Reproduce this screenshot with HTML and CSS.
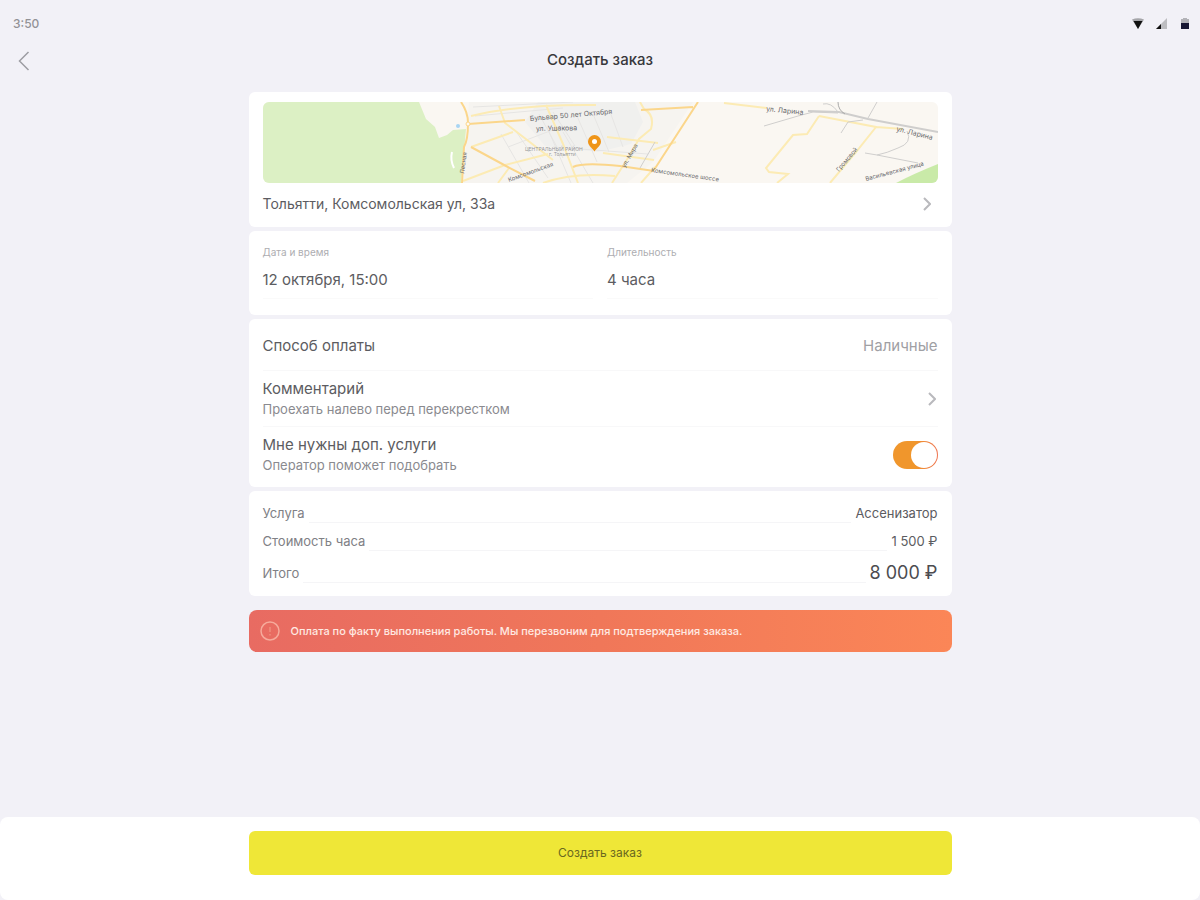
FILE: index.html
```html
<!DOCTYPE html>
<html lang="ru">
<head>
<meta charset="utf-8">
<meta name="viewport" content="width=device-width, initial-scale=1">
<title>Создать заказ</title>
<link rel="stylesheet" href="styles.css">
</head>
<body>
<div class="status">
  <span class="clock">3:50</span>
  <div class="status-icons">
    <svg width="12" height="12" viewBox="0 0 12 12" aria-hidden="true"><path d="M0 1.5Q6-.8 12 1.5L6 11z" fill="#a6a6aa"/><path d="M1.500 3h9L6 11z" fill="#111"/></svg>
    <svg width="12" height="12" viewBox="0 0 12 12" aria-hidden="true"><path d="M11 0v11H0z" fill="#bdbdc1"/><path d="M5 6v5H0z" fill="#111"/></svg>
    <svg width="10" height="12" viewBox="0 0 10 12" aria-hidden="true"><path d="M3 0h4v1h2v5H1V1h2z" fill="#b3b3b8"/><path d="M1 5h8v6H1z" fill="#171733"/></svg>
  </div>
</div>
<header class="header">
  <button class="back" type="button" aria-label="Назад"><svg width="12" height="20" viewBox="0 0 12 20"><path d="M10.500 1L1.500 10l9 9" fill="none" stroke="#9d9da2" stroke-width="1.500"/></svg></button>
  <h1 class="title">Создать заказ</h1>
</header>
<main class="content">
  <section class="card place">
    <svg class="map" viewBox="0 0 675 81" preserveAspectRatio="xMidYMid slice" role="img" aria-label="Карта">
      <rect width="675" height="81" fill="#faf7f2"/>
      <path d="M206 0H430L390 60 364 81H200z" fill="#f6f4f0"/>
      <path d="M275 0H372L380 20 368 42 335 50 282 44 262 20z" fill="#f0f0ee"/>
      <path d="M0 0H156L163 17 172 25 176 36 184 33 190 28 203 27 201 50 198 81H0z" fill="#dcf0c4"/>
      <path d="M675 62V81H633Q650 72 675 62z" fill="#c9eaa8"/>
      <path d="M189 50q-2 8 2 16" fill="none" stroke="#fff" stroke-width="2"/>
      <circle cx="195" cy="24" r="2" fill="#a8d5f3"/>
      <g fill="none" stroke="#e6e5e3">
        <path d="M210 5L310 0M212 14L300 6M245 45L300 24M238 32L266 81M252 28L285 76M284 25L308 81M300 30L330 81M276 12L300 56M290 10L312 44M314 14L334 60M330 12L346 50M346 7L360 45M290 45L385 52"/>
      </g>
      <g fill="none" stroke="#fcebb4" stroke-width="2">
        <path d="M208 14Q255 2 333 3M236 4L242 21 290 58M283 3L300 42 315 81M208 45L250 30M200 79L242 63 285 52M246 66L235 81M280 81Q310 70 352 74M344 35L395 41M340 51L391 58"/>
        <path d="M377 0L381 7Q392 13 388 27L376 37 365 56 349 81M413 40L390 48M392 65L378 81M461 1L504 6M556 14L544 32 530 33 503 66 506 70 525 72 514 81M556 14L613 25 593 50 567 81M613 25L640 27"/>
      </g>
      <g fill="none" stroke="#fbd68b" stroke-width="2">
        <path d="M198 0Q205 10 205 21Q205 38 201 45L199 81M205 22L262 18M208 45L243 64 272 79M310 65Q320 60 357 64L391 69M378 8L430 5M435 0L391 68"/>
      </g>
      <circle cx="205" cy="22" r="2" fill="#fffaf0" stroke="#fbd68b"/>
      <g fill="none" stroke="#cfcecd">
        <path d="M501 24L535 14 550 10 575 11M575 10Q568 0 560 2M578 31L585 20 600 18M605 16L614 0M644 29Q650 41 635 46Q624 51 614 53L602 51M614 53L655 61M392 40L377 66"/>
        <path d="M545 9L576 10 605 17 675 30" stroke-width="2"/><path d="M575 0q0 8 7 12" stroke="#aaa"/>
      </g>
      <g class="map-labels">
        <text class="street" transform="translate(267 19) rotate(-5)">Бульвар 50 лет Октября</text>
        <text class="street" transform="translate(273 29) rotate(-1)">ул. Ушакова</text>
        <text class="district" x="262" y="49">ЦЕНТРАЛЬНЫЙ РАЙОН</text>
        <text class="district" x="286" y="54">г. Тольятти</text>
        <text transform="translate(246 80) rotate(-20)">Комсомольская</text>
        <text transform="translate(201 72) rotate(-82)">Лесная</text>
        <text transform="translate(362 66) rotate(-60)">ул. Мира</text>
        <text transform="translate(388 70) rotate(8)">Комсомольское шоссе</text>
        <text class="street" transform="translate(503 9) rotate(6)">ул. Ларина</text>
        <text class="street" transform="translate(633 29) rotate(14)">ул. Ларина</text>
        <text transform="translate(576 70) rotate(-50)">Громовой</text>
        <text transform="translate(603 79) rotate(-15)">Васильевская улица</text>
      </g>
      <path d="M331.500 33a6.500 6.500 0 0 1 6.500 6.500c0 4-3 5-6.500 10-3.500-5-6.500-6-6.500-10a6.500 6.500 0 0 1 6.500-6.500z" fill="#ef9518"/>
      <circle cx="331.500" cy="39.500" r="2.500" fill="#fff"/>
    </svg>
    <button class="address" type="button">
      <span>Тольятти, Комсомольская ул, 33а</span>
      <svg class="chevron" width="8" height="14" viewBox="0 0 8 14" aria-hidden="true"><path d="M1 1l6 6-6 6"/></svg>
    </button>
  </section>

  <section class="card when">
    <div class="field"><span class="label">Дата и время</span><span class="value">12 октября, 15:00</span></div>
    <div class="field"><span class="label">Длительность</span><span class="value">4 часа</span></div>
  </section>

  <section class="card options">
    <div class="row payment"><span>Способ оплаты</span><span class="muted">Наличные</span></div>
    <button class="row comment" type="button">
      <span class="stack"><span>Комментарий</span><span class="hint">Проехать налево перед перекрестком</span></span>
      <svg class="chevron" width="8" height="14" viewBox="0 0 8 14" aria-hidden="true"><path d="M1 1l6 6-6 6"/></svg>
    </button>
    <label class="row extra">
      <span class="stack"><span>Мне нужны доп. услуги</span><span class="hint">Оператор поможет подобрать</span></span>
      <input class="switch" type="checkbox" role="switch" checked>
    </label>
  </section>

  <dl class="card summary">
    <div class="line"><dt>Услуга</dt><dd>Ассенизатор</dd></div>
    <div class="line"><dt>Стоимость часа</dt><dd>1 500 ₽</dd></div>
    <div class="line total"><dt>Итого</dt><dd>8 000 ₽</dd></div>
  </dl>

  <div class="notice">
    <svg width="20" height="20" viewBox="0 0 20 20" aria-hidden="true"><circle cx="10" cy="10" r="9" fill="none" stroke="#f6aa9b" stroke-width="1.500"/><path d="M10 6v5M10 13v1.500" stroke="#ef8d7c" stroke-width="1.500"/></svg>
    <span>Оплата по факту выполнения работы. Мы перезвоним для подтверждения заказа.</span>
  </div>
</main>
<footer class="footer"><button class="submit" type="button">Создать заказ</button></footer>
</body>
</html>
```
FILE: styles.css
```css
* { box-sizing: border-box; }

body {
  margin: 0;
  min-height: 100vh;
  display: flex;
  flex-direction: column;
  background: #f2f1f7;
  color: #5c5c61;
  font: 15px/20px Inter, "Noto Sans", sans-serif;
}

button {
  margin: 0;
  padding: 0;
  border: 0;
  background: none;
  color: inherit;
  font: inherit;
  text-align: left;
  cursor: pointer;
}

.status {
  display: flex;
  align-items: center;
  justify-content: space-between;
  height: 44px;
  padding: 4px 10px 0 13px;
}

.clock { font-size: 12px; color: #929296; font-weight: 500; }

.status-icons { display: flex; gap: 12px; }

.header {
  display: grid;
  grid-template-columns: 32px 1fr 32px;
  align-items: center;
  height: 32px;
  padding: 0 8px;
}

.back { display: flex; justify-content: center; padding-top: 2px; }

.title {
  margin: 0;
  text-align: center;
  font-size: 15px;
  font-weight: 500;
  color: #38383c;
}

.content {
  flex: 1;
  width: 100%;
  max-width: 703px;
  margin: 0 auto;
  padding: 16px 0;
  display: flex;
  flex-direction: column;
  gap: 4px;
}

.card {
  margin: 0;
  padding: 0 14px;
  border-radius: 6px;
  background: #fff;
}

.place { padding-top: 10px; }

.map { display: block; width: 100%; height: 81px; border-radius: 6px; }

.map-labels { font-size: 6px; fill: #68686c; }

.street { font-size: 7px; }

.district { font-size: 5px; fill: #99999c; }

.address {
  display: flex;
  align-items: center;
  justify-content: space-between;
  width: 100%;
  height: 44px;
  padding: 0 7px 2px 0;
  font-size: 14px;
}

.chevron { fill: none; stroke: #b9b9bd; stroke-width: 2; }

.when {
  display: grid;
  grid-template-columns: 1fr 1fr;
  gap: 14px;
  padding-top: 13px;
  padding-bottom: 16px;
}

.field {
  display: flex;
  flex-direction: column;
  gap: 10px;
  padding-bottom: 8px;
  border-bottom: 1px solid #fafafa;
}

.label { font-size: 10px; line-height: 16px; color: #adadb1; }

.row {
  display: flex;
  align-items: center;
  justify-content: space-between;
  width: 100%;
  border-bottom: 1px solid #f8f8f9;
}

.payment { height: 52px; padding-top: 3px; }

.comment { height: 56px; padding-right: 2px; }

.extra { height: 60px; padding-bottom: 4px; border: 0; }

.muted { color: #a0a0a4; }

.stack { display: flex; flex-direction: column; }

.hint { font-size: 13px; color: #8a8a8f; }

.switch {
  appearance: none;
  width: 45px;
  height: 28px;
  margin: 0;
  padding: 1px;
  border-radius: 14px;
  background: #c8c8cc;
  display: flex;
  cursor: pointer;
}

.switch::before {
  content: "";
  width: 26px;
  height: 26px;
  border-radius: 50%;
  background: #fff;
}

.switch:checked {
  justify-content: flex-end;
  background: linear-gradient(90deg, #f0962c 50%, #ee7350);
}

.summary { padding-top: 8px; padding-bottom: 9px; }

.line {
  display: flex;
  align-items: center;
  justify-content: space-between;
  height: 28px;
  font-size: 13px;
}

.line dt { color: #808085; }

.line dd { order: 2; margin: 0; }

.line::after {
  content: "";
  order: 1;
  flex: 1;
  height: 18px;
  margin: 0 4px;
  border-bottom: 1px solid #f5f5f7;
}

.total { height: 32px; padding-top: 4px; }

.total dd { font-size: 18px; color: #4c4c50; }

.notice {
  display: flex;
  align-items: center;
  gap: 11px;
  margin-top: 10px;
  min-height: 42px;
  padding: 0 11px;
  border-radius: 8px;
  background: linear-gradient(90deg, #e86b62, #f07759 50%, #fb8657);
  color: #ffe9e2;
  font-size: 11px;
  font-weight: 500;
}

.footer {
  padding: 14px 0 25px;
  border-radius: 8px;
  background: #fff;
}

.submit {
  display: block;
  width: 100%;
  max-width: 703px;
  height: 44px;
  margin: 0 auto;
  border-radius: 6px;
  background: #efe737;
  color: #6a671f;
  font-size: 12px;
  text-align: center;
}
```
